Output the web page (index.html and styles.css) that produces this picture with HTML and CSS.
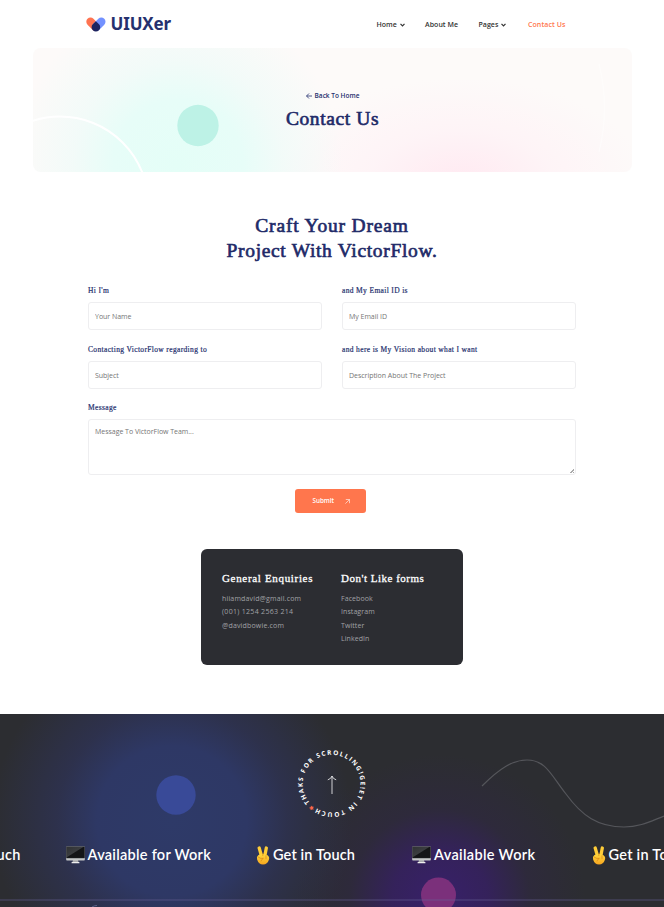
FILE: index.html
```html
<!DOCTYPE html>
<html lang="en">
<head>
<meta charset="utf-8">
<title>Contact Us</title>
<link rel="stylesheet" href="styles.css">
</head>
<body>
<header class="header">
  <a class="logo">
    <svg class="logo-mark" width="20" height="15" viewBox="0 0 20 15"><path d="M4.5 4.8 9.5 9.8" stroke="#ff7350" stroke-width="8.4" stroke-linecap="round"/><path d="M15.3 4.8 10.3 9.8" stroke="#7391ff" stroke-width="8.4" stroke-linecap="round"/><path d="M9.9 4.2 13 7.2A4.3 4.3 0 1 1 6.8 7.2Z" fill="#1d2460"/></svg>
    <span class="wordmark">UIUXer</span>
  </a>
  <nav class="nav">
    <a class="nav-home">Home <svg width="5" height="4" viewBox="0 0 5 4"><path d="M.5 .8 2.5 2.9 4.5 .8" fill="none" stroke="#333" stroke-width="1.2"/></svg></a>
    <a class="nav-about">About Me</a>
    <a class="nav-pages">Pages <svg width="5" height="4" viewBox="0 0 5 4"><path d="M.5 .8 2.5 2.9 4.5 .8" fill="none" stroke="#333" stroke-width="1.2"/></svg></a>
    <a class="nav-contact">Contact Us</a>
  </nav>
</header>
<main>
  <section class="hero">
    <svg class="hero-art" width="599" height="124" viewBox="0 0 599 124"><circle cx="27" cy="157" r="88.5" fill="none" stroke="#fff" stroke-width="2"/><circle cx="165" cy="77.5" r="20.7" fill="#bdf2e6"/><path d="M566 16Q577 60 566 104" fill="none" stroke="#fff" stroke-opacity=".4" stroke-width="1.5"/></svg>
    <a class="back"><svg width="6" height="6" viewBox="0 0 6 6"><path d="M6 3H.6M3 .5 .5 3 3 5.5" fill="none" stroke="#25306e" stroke-width=".8"/></svg><span>Back To Home</span></a>
    <h1>Contact Us</h1>
  </section>
  <section class="contact">
    <h2><span class="line-a">Craft Your Dream</span><br><span class="line-b">Project With VictorFlow.</span></h2>
    <form class="form">
      <label class="field"><span>Hi I'm</span><input placeholder="Your Name"></label>
      <label class="field"><span>and My Email ID is</span><input placeholder="My Email ID"></label>
      <label class="field"><span>Contacting VictorFlow regarding to</span><input placeholder="Subject"></label>
      <label class="field"><span>and here is My Vision about what I want</span><input placeholder="Description About The Project"></label>
      <label class="field wide"><span>Message</span><textarea placeholder="Message To VictorFlow Team..."></textarea></label>
      <button class="submit" type="button"><span>Submit</span><svg width="5" height="5" viewBox="0 0 5 5"><path d="M.4 4.6 4.4 .6M.8 .5H4.5V4.2" fill="none" stroke="#fff" stroke-width=".6"/></svg></button>
    </form>
    <div class="card">
      <div><h3 class="general">General Enquiries</h3><ul class="mail"><li>hiiamdavid@gmail.com</li><li class="phone">(001) 1254 2563 214</li><li>@davidbowie.com</li></ul></div>
      <div><h3>Don't Like forms</h3><ul><li>Facebook</li><li>Instagram</li><li>Twitter</li><li>LinkedIn</li></ul></div>
    </div>
  </section>
</main>
<footer class="footer">
  <svg class="footer-art" width="664" height="193" viewBox="0 0 664 193">
    <circle cx="176" cy="81" r="19.7" fill="#394a98"/>
    <circle cx="438.500" cy="181" r="17.500" fill="#7b307b"/>
    <path d="M482 72C500 54 513 46 527 46C546 46 551 61 566 80C582 102 598 113 624 113C640 113 651 107 664 102" fill="none" stroke="#55565b" stroke-width="1.200"/>
    <path d="M92 193Q94 191.500 97 191.500" fill="none" stroke="#5b628a" stroke-width="1"/>
    <path d="M0 186H664" stroke="#6a6199" stroke-opacity=".4" stroke-width="1.500"/>
  </svg>
  <svg class="scroll-top" width="72" height="72" viewBox="0 0 72 72">
    <defs><path id="ring" d="M16.200 57A28.900 28.900 0 1 1 17 57.700"/></defs>
    <text class="ring-text"><textPath href="#ring" startOffset="3.500" textLength="172">THAKS FOR SCROLLING!GE!ET IN TOUCH</textPath></text>
    <path d="m15.500 57.900.6 1.100 1.300-.1-.7 1.200.6 1.200-1.300-.3-1.100.8-.1-1.300-1.200-.6 1.200-.6z" fill="#ff674a" stroke="#ff674a" stroke-width=".6"/>
    <path d="M36 46V28M31.800 31.800Q35 31 36 28Q37 31 40.200 31.800" fill="none" stroke="#e4e4e6" stroke-width=".9"/>
  </svg>
  <svg width="0" height="0" class="symbols">
    <defs><linearGradient id="screen" x1="0" y1="0" x2="1" y2="1"><stop offset="0" stop-color="#303234"/><stop offset=".45" stop-color="#3b3d40"/><stop offset=".5" stop-color="#141517"/></linearGradient>
    <linearGradient id="skin" x1="0" y1="0" x2="0" y2="1"><stop offset="0" stop-color="#ffd83d"/><stop offset="1" stop-color="#f6a51f"/></linearGradient></defs>
    <symbol id="monitor" viewBox="0 0 19 18"><path d="M7 14H12L12.800 17H6.200Z" fill="#a9abad"/><rect x="5.500" y="16" width="8" height="1.300" rx=".6" fill="#eee"/><rect x=".2" y=".4" width="18.600" height="14" rx=".7" fill="#c5c7c8"/><rect x=".2" y=".4" width="18.600" height="11.800" rx=".7" fill="#36383a"/><rect x=".7" y=".9" width="17.600" height="11" fill="url(#screen)"/></symbol>
    <symbol id="victory" viewBox="0 0 14 19"><path d="M3.200 2 5.500 10M10.300 2 8.800 10" stroke="#ffcd38" stroke-width="3.300" stroke-linecap="round"/><path d="M2.200 9.200Q6 7 11.500 9.200Q14 11 12.800 14Q11.500 18.400 7 18.500Q2.600 18.400 1.100 13.500Q.3 10.700 2.200 9.200Z" fill="url(#skin)"/><path d="M6.800 9.500 7 7.200M10 9.700V12.500M7 12.500Q4.500 13 2.300 11.200M7 12.500Q5.300 13.500 5 15" fill="none" stroke="#d88717" stroke-width=".7" stroke-linecap="round"/></symbol>
  </svg>
  <div class="marquee">
    <span class="item one">Get in Touch</span>
    <span class="item two"><svg width="19" height="18"><use href="#monitor"/></svg>Available for Work</span>
    <span class="item three"><svg width="14" height="19"><use href="#victory"/></svg>Get in Touch</span>
    <span class="item four"><svg width="19" height="18"><use href="#monitor"/></svg>Available Work</span>
    <span class="item five"><svg width="14" height="19"><use href="#victory"/></svg>Get in Touch</span>
  </div>
</footer>
</body>
</html>
```
FILE: styles.css
```css
* { box-sizing: border-box; }
body { margin: 0; height: 907px; overflow: hidden; background: #fff; font-family: Lato, sans-serif; color: #333; }
h1, h2, h3, ul { margin: 0; padding: 0; }
svg { flex: none; }
.header { height: 48px; padding-left: 86px; display: flex; align-items: center; }
.logo { display: flex; align-items: center; gap: 4.500px; width: 290.500px; }
.logo-mark { fill: none; }
.wordmark { font: 700 17px/20px "Noto Sans", sans-serif; color: #25306e; letter-spacing: -.15px; }
.nav { display: flex; padding-top: 1px; font: 600 7px/10px "Open Sans", sans-serif; letter-spacing: .04px; }
.nav a { white-space: nowrap; }
.nav svg { margin-left: 1px; }
.nav-home { width: 48.500px; }
.nav-about { width: 53.5px; }
.nav-pages { width: 49.500px; }
.nav .nav-contact { color: #ff764d; letter-spacing: .08px; }

.hero { position: relative; width: 599px; height: 124px; margin: 0 0 0 33px; padding-top: 42px; border-radius: 8px; overflow: hidden; text-align: center;
  background: radial-gradient(circle at 145px 117px, #e4fef7 0, #e7fdf8 65px, rgba(238,251,248,.7) 105px, rgba(253,251,250,0) 165px), radial-gradient(ellipse 185px 105px at 428px 135px, #ffe9f1, rgba(255,240,245,.6) 50%, rgba(253,250,249,0)), #fdfaf9; }
.hero-art { position: absolute; left: 0; top: 0; }
.back { position: relative; display: flex; align-items: center; justify-content: center; gap: 3px; height: 12px; color: #25306e; font: 600 6.500px/12px "Open Sans", sans-serif; }
h1 { position: relative; margin-top: 5px; font: 400 19.500px/24px "Liberation Serif", serif; letter-spacing: .6px; color: #1e2a68; -webkit-text-stroke: .65px #1e2a68; }

.contact { padding: 42px 88px 0; }
h2 { font: 400 19.500px/24.500px "Liberation Serif", serif; letter-spacing: .67px; color: #1e2a68; text-align: center; white-space: nowrap; -webkit-text-stroke: .65px #1e2a68; }
.line-a { letter-spacing: .82px; }
.form { display: grid; grid-template-columns: 234px 234px; column-gap: 20px; row-gap: 14.500px; margin-top: 23px; }
.field { display: block; font: 400 7.500px/10px "Liberation Serif", serif; letter-spacing: .35px; color: #25306e; -webkit-text-stroke: .2px #25306e; }
.field span { display: block; height: 16px; white-space: nowrap; }
.field input, .field textarea { display: block; width: 100%; margin: 0; padding: 0 6px; border: 1px solid #eeeef0; border-radius: 3px; outline: 0; background: #fff; font: 400 7px/10px "Open Sans", sans-serif; letter-spacing: -.03px; -webkit-text-stroke: 0; }
.field input { height: 28px; padding-top: 1px; }
.field textarea { height: 56px; padding-top: 7px; resize: none; background: linear-gradient(135deg, transparent 50%, #aaa 50%, #aaa 64%, transparent 64%, transparent 78%, #aaa 78%) right 1px bottom 1px / 4px 4px no-repeat; }
.field ::placeholder { color: #757575; }
.wide { grid-column: 1 / 3; }
.submit { grid-column: 1 / 3; justify-self: center; width: 70.500px; height: 24px; margin: -.5px 0 0 -3.500px; padding: 0 0 0 2px; border: 0; border-radius: 3px; background: #ff764d; color: #fff; display: flex; align-items: center; justify-content: center; gap: 11px; font: 600 6.300px/10px "Open Sans", sans-serif; }
.card { width: 262px; height: 116px; margin: 36px 0 0 113px; padding: 23px 21px; display: grid; grid-template-columns: 119px 1fr; border-radius: 6px; background: #2c2d32; color: #a1a2a6; }
h3 { font: 400 11px/13px "Liberation Serif", serif; letter-spacing: .5px; color: #fff; white-space: nowrap; -webkit-text-stroke: .3px #fff; }
.general { letter-spacing: .67px; }
ul { list-style: none; margin-top: 7px; font: 400 7px/13.300px "Open Sans", sans-serif; letter-spacing: .08px; }
.mail { letter-spacing: .17px; }
.phone { letter-spacing: .3px; }

.footer { position: relative; height: 193px; margin-top: 49px; overflow: hidden; color: #fff;
  background: radial-gradient(circle at 172px 107px, #2e3a68 0, #2e3865 75px, rgba(46,51,88,.7) 115px, rgba(44,45,50,0) 180px), radial-gradient(circle at 440px 185px, #38206a 0, rgba(54,32,98,.85) 48px, rgba(48,38,72,.45) 90px, rgba(44,45,50,0) 145px), #2c2d31; }
.footer-art { position: absolute; left: 0; top: 0; }
.scroll-top { position: relative; display: block; margin: 34px auto 0; }
.ring-text { font: 700 6.400px "Open Sans", sans-serif; fill: #fff; }
.symbols { position: absolute; }
.marquee { position: relative; display: flex; margin: 25px 0 0 -63px; height: 20px; width: 800px; font: 600 14.500px/20px Lato, sans-serif; letter-spacing: .27px; }
.item { flex: none; display: flex; align-items: center; gap: 3px; white-space: nowrap; }
.item svg { display: block; }
.one { width: 128.500px; }
.two { width: 190.500px; }
.three { width: 156px; letter-spacing: .15px; }
.four { width: 179.500px; letter-spacing: .33px; }
```
